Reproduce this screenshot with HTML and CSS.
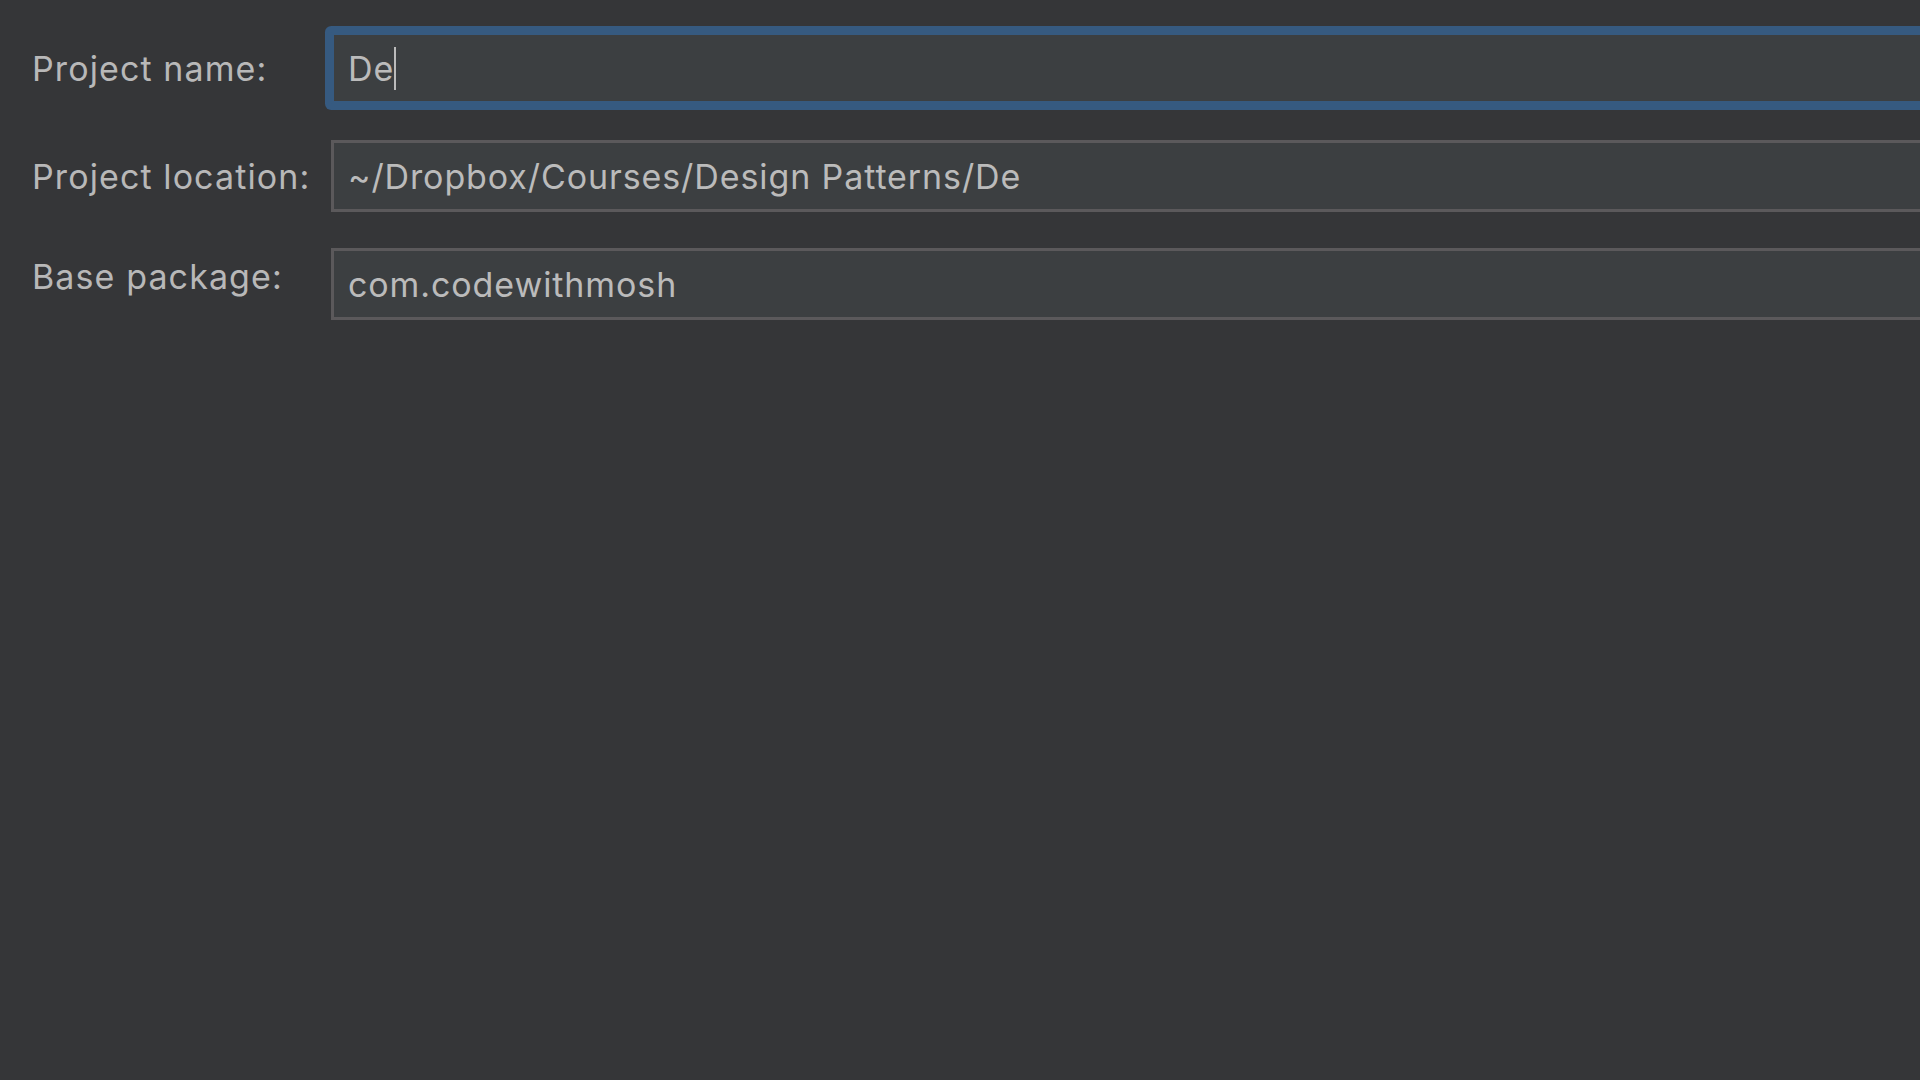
FILE: index.html
```html
<!DOCTYPE html>
<html lang="en">
<head>
<meta charset="utf-8">
<title>New Project</title>
<link rel="stylesheet" href="styles.css">
</head>
<body>
<div class="form">
  <label class="label">Project name:</label>
  <div class="field field--focused"><span class="value">De</span><span class="caret"></span></div>

  <label class="label">Project location:</label>
  <div class="field"><span class="value">~/Dropbox/Courses/Design Patterns/De</span></div>

  <label class="label label--raised">Base package:</label>
  <div class="field"><span class="value">com.codewithmosh</span></div>
</div>
</body>
</html>
```

FILE: styles.css
```css
html, body {
  margin: 0;
  padding: 0;
  height: 100%;
  background: #353638;
  overflow: hidden;
}

body {
  font-family: Inter, "Liberation Sans", sans-serif;
  font-size: 34px;
  color: #bbbbbb;
}

.form {
  display: grid;
  grid-template-columns: 299px 1700px;
  grid-auto-rows: 72px;
  row-gap: 36px;
  padding: 32px 0 0 32px;
}

.label {
  display: flex;
  align-items: center;
  color: #b8b8b8;
  white-space: nowrap;
  letter-spacing: 1.1px;
}

.label--raised {
  padding-bottom: 15px;
}

.field {
  box-sizing: border-box;
  display: flex;
  align-items: center;
  background: #3c3f41;
  border: 3px solid #5b595b;
  padding-left: 14px;
  white-space: nowrap;
}

.field--focused {
  border-color: #365a80;
  border-radius: 2px;
  box-shadow: 0 0 0 6px #365a80;
}

.value {
  color: #bbbbbb;
  letter-spacing: 0.9px;
}

.caret {
  display: inline-block;
  width: 2px;
  height: 43px;
  background: #bbbbbb;
  margin-left: 0;
}
```
